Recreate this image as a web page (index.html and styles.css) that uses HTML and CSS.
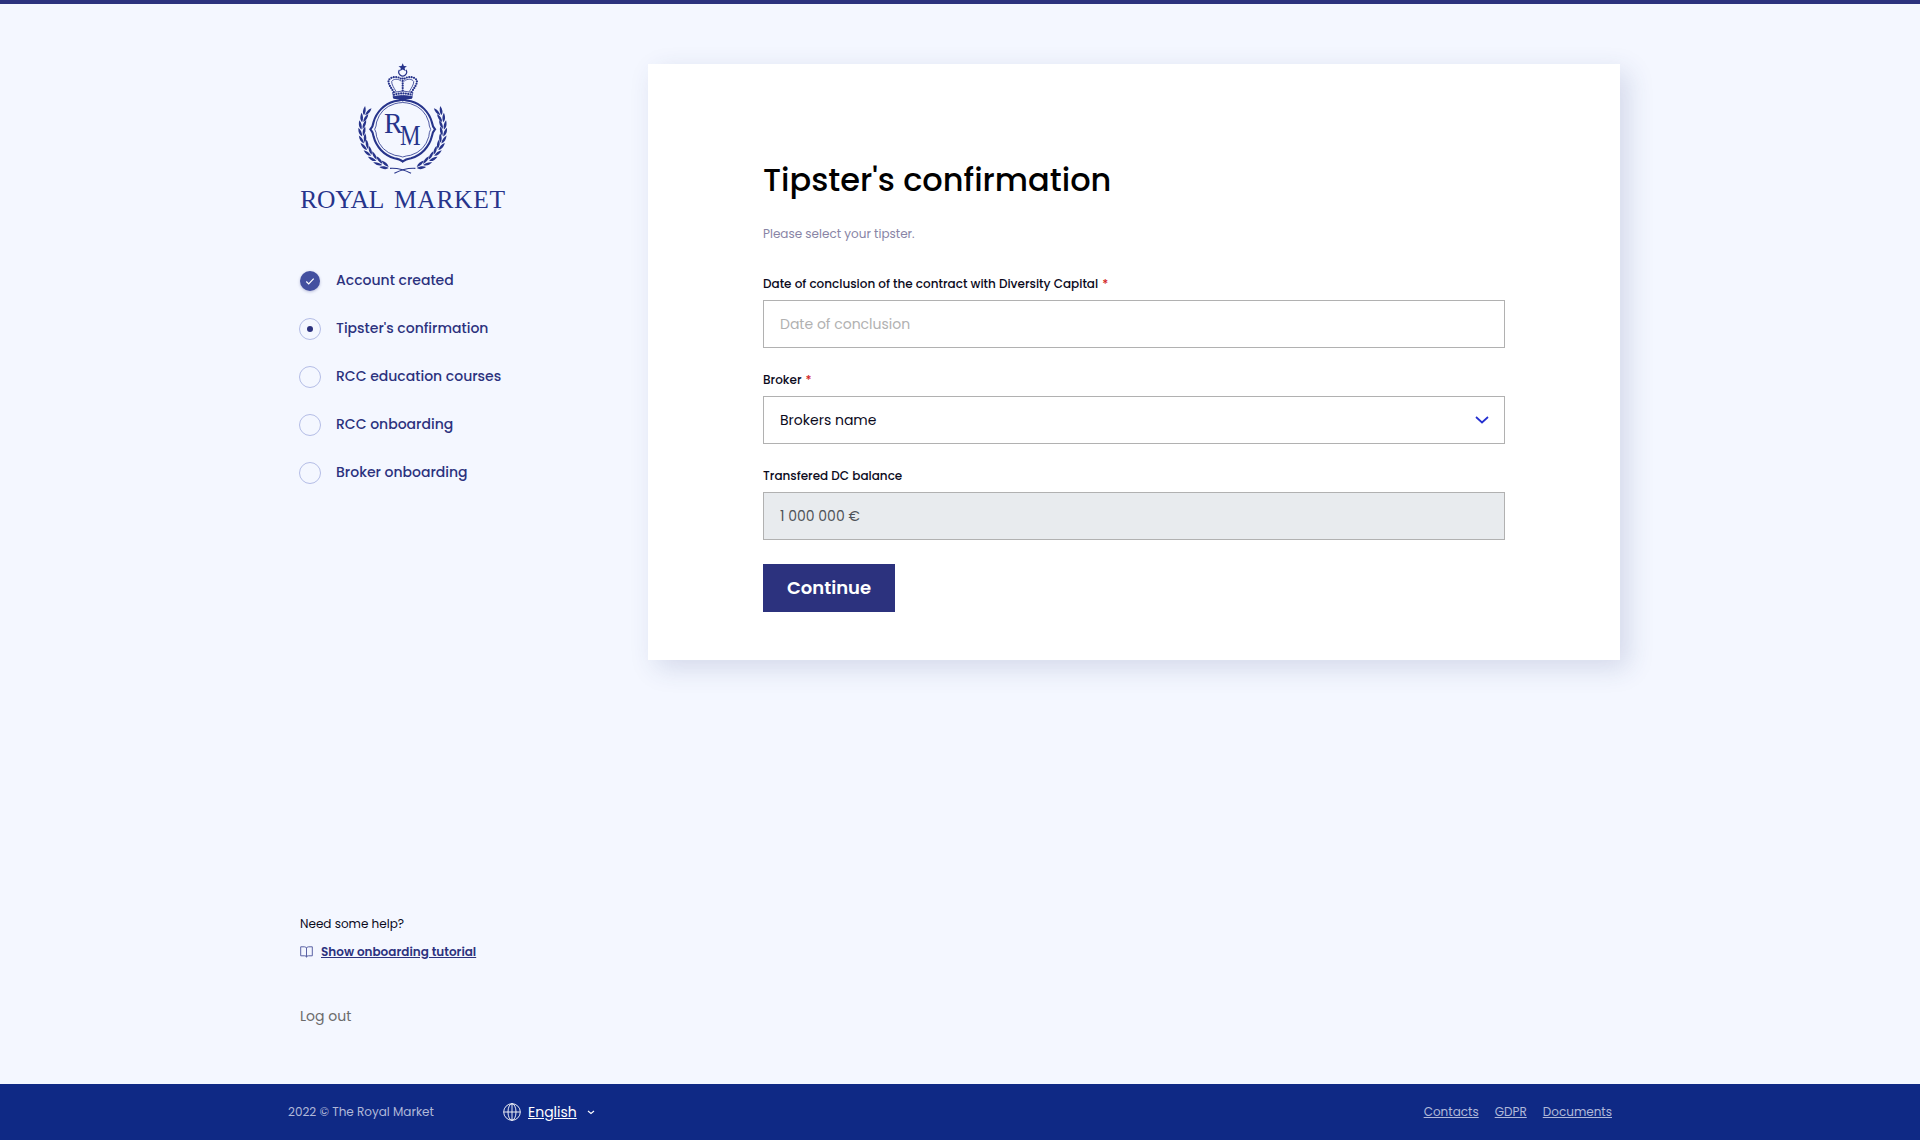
FILE: index.html
```html
<!DOCTYPE html>
<html lang="en">
<head>
<meta charset="utf-8">
<title>Tipster's confirmation – Royal Market</title>
<link rel="stylesheet" href="styles.css">
</head>
<body>
<div class="page">
  <main class="main">
    <aside class="sidebar">
      <svg class="logo" viewBox="300 62 208 150" role="img" aria-label="Royal Market">
        <defs>
          <g id="leaves">
            <path d="M361.700 133c-3-1.800-3.600-5-3-9 2.300 2.300 3.400 5.200 3 9z"/>
            <path d="M362.700 132.500c-.8-3.600.2-6.800 2.800-9.200.6 3.600-.2 6.700-2.800 9.200z"/>
          </g>
          <g id="branch">
            <use href="#leaves" transform="rotate(25 402.700 129.300)"/>
            <use href="#leaves" transform="rotate(15 402.700 129.300)"/>
            <use href="#leaves" transform="rotate(5 402.700 129.300)"/>
            <use href="#leaves" transform="rotate(-5 402.700 129.300)"/>
            <use href="#leaves" transform="rotate(-15 402.700 129.300)"/>
            <use href="#leaves" transform="rotate(-25 402.700 129.300)"/>
            <use href="#leaves" transform="rotate(-35 402.700 129.300)"/>
            <use href="#leaves" transform="rotate(-45 402.700 129.300)"/>
            <use href="#leaves" transform="rotate(-55 402.700 129.300)"/>
            <use href="#leaves" transform="rotate(-65 402.700 129.300)"/>
            <path class="line" d="M390 168.300c8-.5 14.500 1.500 21 5"/>
          </g>
          <g id="crown-half">
            <path class="beads" d="M393.800 92c-2.500-4-5.500-7.500-5.300-11 .6-4 9.500-5.800 13.200-1.500"/>
            <path class="line thin" d="M396 91.500c-2.200-4-4.400-6.800-4.300-10 1.300-2.600 6.500-3.200 9.500-.3"/>
          </g>
        </defs>
        <g class="logo-art">
          <path d="M402.700 63.300l1.200 2.700 3 .2-2.300 1.900.8 3-2.700-1.600-2.700 1.600.8-3-2.300-1.900 3-.2z"/>
          <path class="line" d="M399.500 69.800a3.900 3.900 0 1 0 6.400 0"/>
          <use href="#crown-half"/>
          <use href="#crown-half" transform="matrix(-1 0 0 1 805.400 0)"/>
          <path class="beads" d="M402.700 78.500v13"/>
          <path class="line thin" d="M392.500 92.500q10.200-3 20.400 0l-1 4q-9.200-2.200-18.400 0z"/>
          <path class="beads" d="M394 94.700q8.700-2.600 17.600 0"/>
          <path d="M392.500 96.500q10.200-2.200 20.400 0l-1 2.300q-5.500.2-9.200 2.600-3.700-2.400-9.200-2.600z"/>
          <path class="ring" d="M402.700 99.400Q406 100.300 411 101.200A30 30 0 0 1 431.800 122Q432.500 126.500 435 129.300Q432.500 132 431.800 136.600A30 30 0 0 1 411 158.200Q405.500 159 402.700 161.500Q400 159 394.400 158.200A30 30 0 0 1 373.600 136.600Q373 132 370.400 129.300Q373 126.500 373.600 122A30 30 0 0 1 394.400 101.200Q399.400 100.300 402.700 99.400z"/>
          <path class="line thin" d="M402.700 102.500Q407 102.800 410.500 103.700A27 27 0 0 1 428.800 122Q429 126.500 430.700 129.300Q429 132 428.800 136.600A27 27 0 0 1 410.500 155.300Q406 155.800 402.700 157Q399.400 155.800 394.900 155.300A27 27 0 0 1 376.600 136.600Q376.400 132 374.700 129.300Q376.400 126.500 376.600 122A27 27 0 0 1 394.900 103.700Q398.400 102.800 402.700 102.500z"/>
          <use href="#branch"/>
          <use href="#branch" transform="matrix(-1 0 0 1 805.400 0)"/>
        </g>
        <text class="logo-letter" x="384" y="133.300" textLength="18.500" lengthAdjust="spacingAndGlyphs">R</text>
        <text class="logo-letter" x="400" y="144.700" textLength="20.500" lengthAdjust="spacingAndGlyphs">M</text>
        <g class="logo-name">
          <text x="300.300" y="207.500" textLength="84" lengthAdjust="spacing">ROYAL</text>
          <text x="394" y="207.500" textLength="111" lengthAdjust="spacing">MARKET</text>
        </g>
      </svg>

      <ol class="steps">
        <li class="step"><span class="mark mark-done"><svg viewBox="0 0 20 20"><path d="M6.300 10.500l2.400 2.400 5-5.300"/></svg></span><span class="step-name">Account created</span></li>
        <li class="step"><span class="mark mark-current"></span><span class="step-name">Tipster's confirmation</span></li>
        <li class="step"><span class="mark"></span><span class="step-name">RCC education courses</span></li>
        <li class="step"><span class="mark"></span><span class="step-name">RCC onboarding</span></li>
        <li class="step"><span class="mark"></span><span class="step-name">Broker onboarding</span></li>
      </ol>

      <div class="help">
        <p>Need some help?</p>
        <a class="help-link" href="#"><svg class="book" viewBox="0 0 13 12"><path d="M6.500 2v9.500M6.500 2Q6 .8 4.500.8H.7v9h4Q6.500 9.800 6.500 11Q6.500 9.800 8.300 9.800h4v-9H8.500Q7 .8 6.500 2"/></svg><span class="help-text">Show onboarding tutorial</span></a>
        <a class="logout" href="#">Log out</a>
      </div>
    </aside>

    <form class="card">
      <h1 class="title">Tipster's confirmation</h1>
      <p class="lead">Please select your tipster.</p>
      <div class="field">
        <label class="label">Date of conclusion of the contract with Diversity Capital <span class="req">*</span></label>
        <div class="input placeholder">Date of conclusion</div>
      </div>
      <div class="field">
        <label class="label">Broker <span class="req">*</span></label>
        <div class="input">Brokers name<svg class="caret" viewBox="0 0 14 8"><path d="M1 1l6 5.500L13 1"/></svg></div>
      </div>
      <div class="field">
        <label class="label">Transfered DC balance</label>
        <div class="input disabled">1 000 000 €</div>
      </div>
      <button class="button" type="button">Continue</button>
    </form>
  </main>

  <footer class="footer">
    <span class="copyright">2022 © The Royal Market</span>
    <a class="language" href="#"><svg class="globe" viewBox="0 0 18 18"><circle cx="9" cy="9" r="8.300"/><ellipse cx="9" cy="9" rx="4" ry="8.300"/><path d="M9 .7v16.600M.7 9h16.600"/></svg><span class="language-name">English</span><svg class="mini-caret" viewBox="0 0 8 5"><path d="M1 1l3 2.500L7 1"/></svg></a>
    <nav class="links">
      <a href="#">Contacts</a>
      <a href="#">GDPR</a>
      <a href="#">Documents</a>
    </nav>
  </footer>
</div>
</body>
</html>
```
FILE: styles.css
```css
* { box-sizing: border-box; }

body {
  margin: 0;
  background: #f4f7ff;
  color: #0b0a1c;
  font-family: Poppins, Inter, sans-serif;
  font-size: 14px;
  line-height: 20px;
}

a { color: inherit; text-decoration: none; }
p, h1, ol { margin: 0; padding: 0; }
svg { display: block; flex: none; fill: none; }

.page {
  display: flex;
  flex-direction: column;
  height: 1140px;
  border-top: 4px solid #2c327e;
  overflow: hidden;
}

.main {
  display: flex;
  flex: 1;
  align-items: flex-start;
  justify-content: space-between;
  width: 1320px;
  margin: 0 auto;
  padding-top: 58px;
}

.sidebar {
  display: flex;
  flex-direction: column;
  align-self: stretch;
  width: 240px;
}

/* Logo */
.logo { width: 208px; height: 150px; }
.logo-art { fill: #27348b; }
.line, .ring, .beads { fill: none; stroke: #27348b; stroke-width: 1.2; }
.ring { stroke-width: 2.1; }
.thin { stroke-width: .8; }
.beads { stroke-width: 2.2; stroke-dasharray: 0 2.4; stroke-linecap: round; }
.logo-letter, .logo-name { fill: #27348b; font-family: "Liberation Serif", serif; }
.logo-letter { font-size: 28.5px; }
.logo-name { font-size: 25.5px; }

/* Progress steps */
.steps { list-style: none; margin-top: 58px; margin-left: -1px; }
.step {
  display: flex;
  align-items: center;
  gap: 15px;
  height: 22px;
  margin-bottom: 26px;
  color: #2c327e;
  font-weight: 500;
}
.step-name { margin-bottom: 2px; }
.mark {
  display: flex;
  align-items: center;
  justify-content: center;
  width: 22px;
  height: 22px;
  border: 1px solid #b4bde6;
  border-radius: 50%;
}
.mark-done {
  width: 20px;
  height: 20px;
  margin: 0 1px;
  border: 0;
  background: #4350a0;
  box-shadow: 0 1px 3px rgba(44, 50, 126, .3);
}
.mark-done svg { width: 20px; height: 20px; stroke: #fff; stroke-width: 1.2; }
.mark-current::after {
  content: "";
  width: 6px;
  height: 6px;
  border-radius: 50%;
  background: #2c327e;
}

/* Help */
.help {
  display: flex;
  flex-direction: column;
  align-items: flex-start;
  margin-top: auto;
  padding-bottom: 58px;
  font-size: 12px;
}
.help-link { display: flex; align-items: center; gap: 8px; margin-top: 8px; color: #2c327e; font-weight: 600; }
.help-text { text-decoration: underline; }
.book { width: 13px; height: 12px; stroke: #5a62a4; }
.logout { margin-top: 44px; color: #6b6b6b; font-size: 14px; }

/* Form card */
.card {
  width: 972px;
  height: 596px;
  margin-top: 2px;
  padding: 92px 115px 0;
  background: #fff;
  box-shadow: 8px 8px 25px rgba(44, 60, 126, .16);
}
.title { color: #000; font-size: 32px; font-weight: 500; line-height: 48px; }
.lead { margin-top: 20px; color: #8884a5; font-size: 12px; }
.field { margin-bottom: 22px; }
.lead + .field { margin-top: 30px; }
.label { display: block; height: 26px; font-size: 12px; font-weight: 500; }
.req { margin-left: 1px; color: #d21f1f; }
.input {
  display: flex;
  align-items: center;
  justify-content: space-between;
  height: 48px;
  padding: 0 15px 0 16px;
  border: 1px solid #b1b1b1;
  background: #fff;
}
.placeholder { color: #b1b1b1; }
.disabled { background: #e8ebee; color: #4f5358; }
.caret { width: 14px; height: 8px; stroke: #2430d0; stroke-width: 1.7; }
.button {
  display: block;
  height: 48px;
  width: 132px;
  margin-top: 24px;
  padding: 0;
  border: 0;
  background: #2c327e;
  color: #fff;
  font: 600 18px/24px Poppins, Inter, sans-serif;
}

/* Footer */
.footer {
  display: flex;
  align-items: center;
  height: 56px;
  padding: 0 308px 0 288px;
  background: #0f2985;
  color: #b0b8d8;
  font-size: 12px;
}
.copyright { width: 215px; }
.language { display: flex; align-items: center; color: #fff; font-size: 14px; }
.globe { width: 18px; height: 18px; stroke: #fff; stroke-width: .9; }
.language-name { margin: 0 10px 0 7px; text-decoration: underline; }
.mini-caret { width: 8px; height: 5px; stroke: #fff; stroke-width: 1.1; }
.links { display: flex; gap: 16px; margin-left: auto; }
.links a { text-decoration: underline; }
```
